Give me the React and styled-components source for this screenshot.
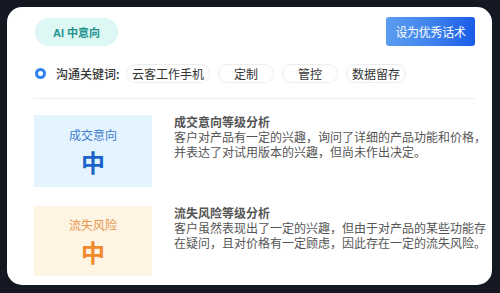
import React from "react";
import styled, { createGlobalStyle } from "styled-components";

const Global = createGlobalStyle`
  html, body { margin: 0; padding: 0; background: #131823; }
  body { font-family: "Noto Sans CJK SC", "Noto Sans", sans-serif; }
  * { box-sizing: border-box; }
`;

const Frame = styled.div`
  width: 500px;
  height: 293px;
  padding: 7px 8px 8px 7px;
  background: #131823;
`;

const Card = styled.div`
  width: 485px;
  height: 278px;
  background: #ffffff;
  border-radius: 15px;
  padding: 10px 17px 0 27px;
  display: flex;
  flex-direction: column;
`;

const Header = styled.div`
  display: flex;
  justify-content: space-between;
  align-items: center;
  height: 29px;
`;

const AiPill = styled.div`
  width: 83px;
  height: 28px;
  margin-left: 1px;
  border-radius: 14px;
  background: #dcf7f4;
  color: #23918c;
  font-size: 11px;
  font-weight: 600;
  display: flex;
  align-items: center;
  justify-content: center;
  font-family: "Liberation Sans", "Noto Sans CJK SC", sans-serif;
`;

const PrimaryButton = styled.button`
  width: 89px;
  height: 29px;
  border: none;
  border-radius: 3px;
  background: linear-gradient(90deg, #5c9df0 0%, #3f84ee 50%, #1a5ce8 100%);
  color: #ffffff;
  font-size: 12px;
  font-family: inherit;
  padding: 0;
  line-height: 29px;
  letter-spacing: -0.3px;
`;

const KeywordRow = styled.div`
  display: flex;
  align-items: center;
  height: 19px;
  margin-top: 18px;
`;

const Radio = styled.span`
  width: 11px;
  height: 11px;
  border-radius: 50%;
  border: 3px solid #2f80f0;
  background: #fff;
  margin-left: 1px;
  flex: none;
`;

const KeywordLabel = styled.span`
  margin-left: 10px;
  font-size: 12px;
  font-weight: 500;
  color: #333;
  line-height: 19px;
  width: 70px;
  flex: none;
`;

const Tags = styled.div`
  display: flex;
  gap: 8px;
`;

const Tag = styled.span`
  min-width: 56px;
  height: 19px;
  padding: 0 5px;
  border: 1px solid #ededed;
  border-radius: 10px;
  font-size: 12px;
  line-height: 17px;
  color: #333;
  text-align: center;
  background: #fff;
`;

const Divider = styled.div`
  height: 1px;
  background: #eeeeee;
  margin: 15px 0 16px -1px;
`;

const Section = styled.div`
  display: flex;
  align-items: flex-start;
  margin-top: ${(p) => p.$gap || 0}px;
`;

const LevelBox = styled.div`
  width: 118px;
  height: ${(p) => p.$h}px;
  flex: none;
  background: ${(p) => p.$bg};
  display: flex;
  flex-direction: column;
  align-items: center;
  justify-content: center;
`;

const LevelName = styled.div`
  font-size: 12px;
  line-height: 14px;
  color: ${(p) => p.$color};
`;

const LevelValue = styled.div`
  font-size: 24px;
  font-weight: 700;
  line-height: 26px;
  margin-top: 7px;
  color: ${(p) => p.$color};
`;

const Analysis = styled.div`
  flex: 0 0 auto;
  width: 312px;
  min-width: 312px;
  margin: -1px -12px 0 22px;
  color: #555;
  font-size: 12px;
  line-height: 15px;
  word-break: break-all;
  line-break: anywhere;
`;

const AnalysisTitle = styled.div`
  font-weight: 700;
  color: #555;
`;

const AnalysisBody = styled.div`
  color: #555;
`;

export default function App() {
  return (
    <>
      <Global />
      <Frame>
        <Card>
          <Header>
            <AiPill>AI 中意向</AiPill>
            <PrimaryButton>设为优秀话术</PrimaryButton>
          </Header>
          <KeywordRow>
            <Radio />
            <KeywordLabel>沟通关键词:</KeywordLabel>
            <Tags>
              <Tag>云客工作手机</Tag>
              <Tag>定制</Tag>
              <Tag>管控</Tag>
              <Tag>数据留存</Tag>
            </Tags>
          </KeywordRow>
          <Divider />
          <Section>
            <LevelBox $h={72} $bg="#e4f4fe">
              <LevelName $color="#3d7ad0">成交意向</LevelName>
              <LevelValue $color="#1b63c9">中</LevelValue>
            </LevelBox>
            <Analysis>
              <AnalysisTitle>成交意向等级分析</AnalysisTitle>
              <AnalysisBody>
                客户对产品有一定的兴趣，询问了详细的产品功能和价格，并表达了对试用版本的兴趣，但尚未作出决定。
              </AnalysisBody>
            </Analysis>
          </Section>
          <Section $gap={19}>
            <LevelBox $h={70} $bg="#fef4e4">
              <LevelName $color="#e8974e">流失风险</LevelName>
              <LevelValue $color="#f0892a">中</LevelValue>
            </LevelBox>
            <Analysis>
              <AnalysisTitle>流失风险等级分析</AnalysisTitle>
              <AnalysisBody>
                客户虽然表现出了一定的兴趣，但由于对产品的某些功能存在疑问，且对价格有一定顾虑，因此存在一定的流失风险。
              </AnalysisBody>
            </Analysis>
          </Section>
        </Card>
      </Frame>
    </>
  );
}
